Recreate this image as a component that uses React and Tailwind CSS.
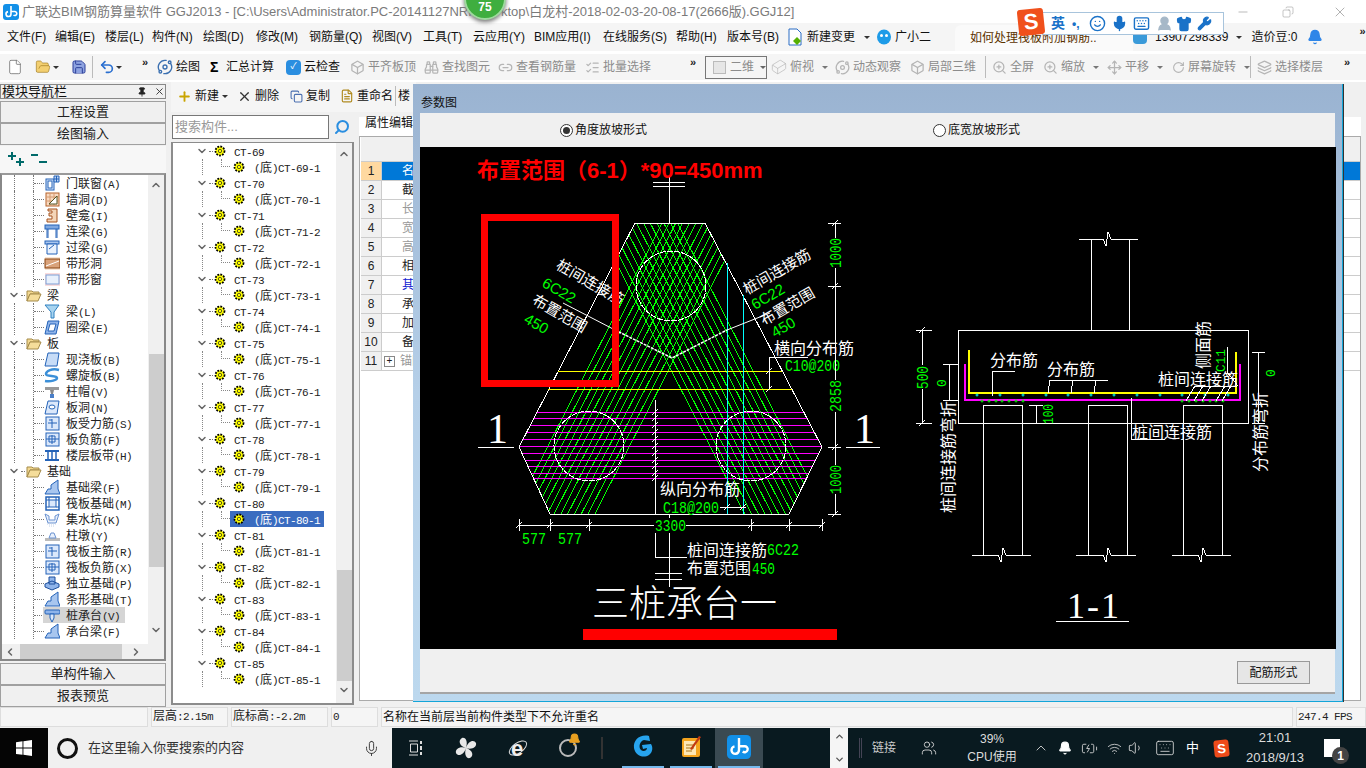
import React from 'react';
import {
  ChevronDown, ChevronUp, ChevronLeft, ChevronRight, Pin, X, Minus, Copy, Search, Plus,
  File, FileText, FolderOpen, Save, Undo2, Binoculars, Box, Orbit, ZoomIn, Move, RotateCw, Layers,
  Mic, Keyboard, Wrench, Shirt, Smile, Bell, Wifi, Volume1, BatteryCharging, Users, UserRound,
  Cuboid, ListChecks, Link2,
} from 'lucide-react';

const SANS = "[font-family:'Liberation_Sans','Noto_Sans_CJK_SC',sans-serif]";
const CJK_MONO = "[font-family:'Liberation_Mono','Noto_Sans_CJK_SC',monospace]";

// SimSun look: latin is half the width of a hanzi
const MonoText = ({ text }) => (
  <span className={`${CJK_MONO} whitespace-nowrap text-[12px] text-[#222]`}>
    {text.split(/([\u4e00-\u9fff]+)/).map((part, i) =>
      /[\u4e00-\u9fff]/.test(part)
        ? <span key={i}>{part}</span>
        : <span key={i} className="text-[11px] tracking-[-0.6px]">{part}</span>
    )}
  </span>
);

const Caret = ({ className = '' }) => (
  <span className={`inline-block border-x-[3px] border-t-[3px] border-x-transparent border-t-[#333] ${className}`} />
);

const Chevrons = ({ className = '' }) => (
  <span className={`text-[11px] font-bold leading-none tracking-[-1px] text-[#222] ${className}`}>»</span>
);

/* ---------- title + menu ---------- */

const AppLogo = ({ size = 16 }) => (
  <svg width={size} height={size} viewBox="0 0 16 16" className="shrink-0">
    <rect width="16" height="16" rx="3" fill="#1290e8" />
    <path d="M8 2v8M8 10a2.500 2.500 0 1 1-3-2.400M8 7.500h3.500a2 2 0 1 1-1 3.500" fill="none" stroke="#fff" strokeWidth="1.600" />
  </svg>
);

const TitleBar = () => (
  <div className="flex h-[23px] items-center bg-white pl-[3px] text-[13px] text-[#7a7a7a]">
    <AppLogo size={16} />
    <span className="ml-[3px] w-[444px] shrink-0 whitespace-nowrap">
      广联达BIM钢筋算量软件 GGJ2013 - [C:\Users\Administrator.PC-20141127NRHI
    </span>
    <span className="ml-[35px] whitespace-nowrap">ktop\白龙村-2018-02-03-20-08-17(2666版).GGJ12]</span>
    <div className="ml-auto flex items-center text-[#8a8a8a]">
      <Minus size={14} strokeWidth={1} className="mr-[32px]" />
      <Copy size={12} strokeWidth={1} className="mr-[38px] -scale-x-100" />
      <X size={16} strokeWidth={1} className="mr-[18px]" />
    </div>
  </div>
);

const MENU = [
  ['文件(F)', 48], ['编辑(E)', 50], ['楼层(L)', 47], ['构件(N)', 51], ['绘图(D)', 53], ['修改(M)', 53],
  ['钢筋量(Q)', 63], ['视图(V)', 51], ['工具(T)', 50], ['云应用(Y)', 61], ['BIM应用(I)', 69], ['在线服务(S)', 73],
  ['帮助(H)', 51], ['版本号(B)', 60],
];

const MenuBar = () => (
  <div className="flex h-[31px] items-center border-b-[3px] border-white bg-[#f5f5f5] pl-[7px] text-[12px] text-[#111]">
    {MENU.map(([label, w]) => (
      <span key={label} className="whitespace-nowrap" style={{ width: w }}>{label}</span>
    ))}
    <svg width="16" height="18" viewBox="0 0 16 18" className="mr-[4px]">
      <path d="M2 1h8l4 4v12H2z" fill="#fff" stroke="#2b6cc4" />
      <path d="M10 9l4 4-4 4-4-4z" fill="#56b000" />
    </svg>
    <span className="whitespace-nowrap">新建变更</span>
    <Caret className="ml-[9px] mr-[6px]" />
    <svg width="16" height="16" viewBox="0 0 16 16" className="mr-[3px]">
      <ellipse cx="8" cy="8" rx="7" ry="7.500" fill="#1d9be8" />
      <circle cx="5.500" cy="6.500" r="1.500" fill="#fff" />
      <circle cx="10.500" cy="6.500" r="1.500" fill="#fff" />
    </svg>
    <span className="whitespace-nowrap">广小二</span>
    <div className="ml-[24px] flex h-[26px] w-[178px] items-center self-end rounded-t-md bg-[#fafafa] pl-[15px] text-[#5a3200]">
      <span className="whitespace-nowrap">如何处理筏板附加钢筋..</span>
    </div>
    <span className="h-[14px] w-[14px] rounded-sm bg-[#3a9ad9]" />
    <span className="ml-[8px] whitespace-nowrap">13907298339</span>
    <Caret className="ml-[8px]" />
    <span className="ml-[9px] whitespace-nowrap">造价豆:0</span>
    <Bell size={16} fill="#2f86e8" stroke="#2f86e8" className="ml-[10px]" />
    <Chevrons className="ml-[36px] self-start pt-[3px]" />
  </div>
);

/* ---------- main toolbar ---------- */

const GRAY = '#b5b5b5';
const TOOLS = [
  { w: 28, icon: <File size={16} strokeWidth={1} color="#555" fill="#fff" /> },
  { w: 18, icon: <FolderOpen size={16} strokeWidth={1} color="#a07a20" fill="#f3cf70" /> },
  { w: 18, caret: true },
  { w: 21, icon: <Save size={16} strokeWidth={1.500} color="#2c3f9a" fill="#8ea3e0" /> },
  { w: 7, sep: true },
  { w: 17, icon: <Undo2 size={16} strokeWidth={2.500} color="#2a6fd0" /> },
  { w: 26, caret: true },
  { w: 15, more: true },
  { w: 53, icon: <Orbit size={16} color="#3a6fb0" />, text: '绘图' },
  { w: 76, icon: <span className="w-[13px] text-[14px] font-bold">Σ</span>, text: '汇总计算' },
  { w: 64, icon: <span className="flex h-[15px] w-[15px] items-center justify-center rounded-sm bg-[#2a8ee0] text-[9px] text-white">✓</span>, text: '云检查' },
  { w: 74, icon: <Box size={15} color={GRAY} />, text: '平齐板顶', off: true },
  { w: 74, icon: <Binoculars size={15} color={GRAY} />, text: '查找图元', off: true },
  { w: 87, icon: <Link2 size={15} color={GRAY} />, text: '查看钢筋量', off: true },
  { w: 105, icon: <ListChecks size={15} color={GRAY} />, text: '批量选择', off: true },
  { w: 15, more: true },
];
const TOOLS_RIGHT = [
  { w: 64, icon: <Cuboid size={16} strokeWidth={1} color={GRAY} />, text: '俯视', caretAfter: true, off: true },
  { w: 75, icon: <Orbit size={15} color={GRAY} />, text: '动态观察', off: true },
  { w: 75, icon: <Box size={15} color={GRAY} />, text: '局部三维', off: true },
  { w: 58, sepBefore: true, icon: <ZoomIn size={15} color={GRAY} />, text: '全屏', off: true },
  { w: 64, icon: <ZoomIn size={15} color={GRAY} />, text: '缩放', caretAfter: true, off: true },
  { w: 65, icon: <Move size={15} color={GRAY} />, text: '平移', caretAfter: true, off: true },
  { w: 78, icon: <RotateCw size={15} color={GRAY} />, text: '屏幕旋转', caretAfter: true, off: true },
];

const ToolItem = ({ t }) => {
  if (t.sep) return <div style={{ width: t.w }} className="flex h-[22px] shrink-0 justify-start"><span className="w-px bg-[#bbb]" /></div>;
  if (t.caret) return <div style={{ width: t.w }} className="flex shrink-0 items-center"><Caret /></div>;
  if (t.more) return <div style={{ width: t.w }} className="flex shrink-0 self-start pt-[3px]"><Chevrons /></div>;
  return (
    <div style={{ width: t.w }} className="flex shrink-0 items-center gap-[3px] whitespace-nowrap">
      {t.sepBefore && <span className="mr-[3px] h-[22px] w-px bg-[#bbb]" />}
      {t.icon}
      {t.text && <span className={t.off ? 'text-[#8c8c8c]' : 'text-[#111]'}>{t.text}</span>}
      {t.caretAfter && <Caret className="ml-[5px] border-t-[#777]" />}
    </div>
  );
};

const ToolBar = () => (
  <div className="flex h-[28px] items-center border-b-2 border-white bg-[#f5f5f5] pl-[7px] text-[12px]">
    {TOOLS.map((t, i) => <ToolItem key={i} t={t} />)}
    <div className="flex h-[23px] w-[62px] shrink-0 items-center border border-[#777] pl-[7px] text-[#8c8c8c]">
      <span className="mr-[4px] h-[13px] w-[13px] border border-[#bbb] bg-[#e6e6e6]" />
      二维
      <Caret className="ml-[6px] border-t-[#666]" />
    </div>
    <div className="w-[4px] shrink-0" />
    {TOOLS_RIGHT.map((t, i) => <ToolItem key={i} t={t} />)}
    <span className="mr-[6px] h-[22px] w-px shrink-0 bg-[#bbb]" />
    <Layers size={15} color={GRAY} className="shrink-0" />
    <span className="ml-[3px] whitespace-nowrap text-[#8c8c8c]">选择楼层</span>
    <Chevrons className="ml-[21px] self-start pt-[3px]" />
  </div>
);

/* ---------- module tree ---------- */

const TreeIcon = ({ kind }) => {
  const b = '#2463b8';
  const art = {
    window: <><rect x="2" y="4" width="8" height="11" fill="#dbe8fb" stroke={b} /><rect x="4" y="6" width="4" height="7" fill="#fff" stroke={b} /><path d="M10 1h5v6h-5zM12.500 1v6M10 4h5" fill="#bcd4f5" stroke={b} /></>,
    hole: <><rect x="2" y="2" width="13" height="13" fill="#f8d9c0" stroke="#b5622a" /><path d="M2 6h13M2 10h13M6 2v13M10 2v13" stroke="#d49a70" /><path d="M5 13l8-8v8z" fill="#fff" stroke="#552" /></>,
    niche: <path d="M4 2h9v13H3v-3h5v-3H5V6h3V4H4z" fill="#f4d5b8" stroke="#a5531f" />,
    lintel: <><rect x="1" y="2" width="14" height="4" fill="#7fa8e0" stroke={b} /><path d="M4 6v9M12 6v9M3 6v9M13 6v9" stroke={b} /></>,
    lintel2: <><rect x="1" y="2" width="14" height="3" fill="#a9c6ef" stroke={b} /><path d="M3 5h10v10H3z" fill="#eaf2fd" stroke={b} /><path d="M5 10l5-4" stroke={b} /></>,
    band: <><rect x="1" y="2" width="15" height="13" fill="#f9e4d2" /><rect x="1" y="4" width="15" height="9" fill="#d9a27a" stroke="#8a4512" /><path d="M2 11l13-5" stroke="#fff" /></>,
    bandw: <><rect x="1" y="2" width="15" height="13" fill="#fbdcdc" /><rect x="2" y="4" width="13" height="9" fill="#e8f0fc" stroke="#7d9fd6" /></>,
    beam: <path d="M1 2h14l-5 7v6H7V9z" fill="#a8d4f0" stroke="#2f80c0" />,
    ring: <path d="M4 2h11l-3 13H1zM6 5l-2 7h6l2-7z" fill="#8fb4ea" stroke={b} fillRule="evenodd" />,
    slab: <path d="M4 2h11l-2 13H1z" fill="#c7dcf7" stroke={b} />,
    spiral: <path d="M15 3C8 1 2 4 2 7c0 3 11 1 11 4 0 2-6 4-12 3" fill="none" stroke="#3b8fd8" strokeWidth="2.500" />,
    cap: <><rect x="1" y="4" width="14" height="3" fill="#999" /><path d="M6 7h4l-1 4H7z" fill="#888" /><rect x="6" y="11" width="4" height="4" fill="#4a7fc8" /></>,
    slabhole: <><path d="M4 2h11l-2 13H1z" fill="#dbe8fb" stroke={b} /><ellipse cx="8" cy="8" rx="3" ry="2" fill="#fff" stroke={b} /></>,
    rebar: <><rect x="2" y="2" width="13" height="13" fill="#dbe8fb" stroke={b} /><path d="M4 8h9M8 4v9M5 5h3" stroke={b} /></>,
    rebar2: <><rect x="2" y="2" width="13" height="13" fill="#dbe8fb" stroke={b} /><path d="M2 8h13M8 4v9M5 5v6h6V5z" fill="none" stroke={b} /></>,
    strip: <><rect x="1" y="3" width="14" height="2" fill={b} /><rect x="1" y="12" width="14" height="2" fill={b} /><path d="M4 5v7M8 5v7M12 5v7" stroke={b} strokeWidth="1.500" /></>,
    fbeam: <path d="M1 15l3-5h3V6l7-5v9l2 5z" fill="#a8c6ef" stroke={b} />,
    raft: <><rect x="2" y="2" width="13" height="13" fill="none" stroke={b} strokeWidth="1.500" /><rect x="5" y="5" width="7" height="7" fill="#dbe8fb" stroke={b} /><path d="M2 5h3M12 5h3M2 12h3M12 12h3M5 2v3M12 2v3" stroke={b} /></>,
    pit: <><path d="M1 3l4 2v4h6V5l4-2-3 9H4z" fill="#e8f0fc" stroke="#6a92d0" /><path d="M3 13h10M5 15h6" stroke="#c0d0e8" strokeDasharray="1 1" /></>,
    pier: <><rect x="1" y="11" width="15" height="3" fill="#bbb" /><path d="M5 11l2-5h3l2 5z" fill="#e8f0fc" stroke="#6a92d0" /></>,
    iso: <path d="M1 9l7-3 7 3v3l-7 3-7-3zM5 2h6v7H5z" fill="#8fb4ea" stroke="#1d4f9c" />,
    cap2: <><rect x="1" y="3" width="15" height="4" rx="1" fill="#8fb4ea" stroke={b} /><path d="M6 7h4v4l-2 4-2-4z" fill="#dbe8fb" stroke={b} /></>,
  };
  return <svg width="16" height="16" viewBox="0 0 16 16" className="shrink-0">{art[kind]}</svg>;
};

const Folder = () => (
  <svg width="16" height="14" viewBox="0 0 16 14" className="shrink-0">
    <path d="M1 3h5l1 1h6v2H4L1 13z" fill="#f3d890" stroke="#a58b4a" />
    <path d="M4 6h11l-3 7H1z" fill="#f5dd9a" stroke="#a58b4a" />
  </svg>
);

const MODULES = [
  ['门联窗(A)', 'window'], ['墙洞(D)', 'hole'], ['壁龛(I)', 'niche'], ['连梁(G)', 'lintel'], ['过梁(G)', 'lintel2'],
  ['带形洞', 'band'], ['带形窗', 'bandw'], ['梁'], ['梁(L)', 'beam'], ['圈梁(E)', 'ring'], ['板'],
  ['现浇板(B)', 'slab'], ['螺旋板(B)', 'spiral'], ['柱帽(V)', 'cap'], ['板洞(N)', 'slabhole'], ['板受力筋(S)', 'rebar'],
  ['板负筋(F)', 'rebar2'], ['楼层板带(H)', 'strip'], ['基础'], ['基础梁(F)', 'fbeam'], ['筏板基础(M)', 'raft'],
  ['集水坑(K)', 'pit'], ['柱墩(Y)', 'pier'], ['筏板主筋(R)', 'rebar'], ['筏板负筋(X)', 'rebar2'], ['独立基础(P)', 'iso'],
  ['条形基础(T)', 'fbeam'], ['桩承台(V)', 'cap2'], ['承台梁(F)', 'fbeam'],
];

const ModuleRow = ({ label, kind }) => {
  const selected = label === '桩承台(V)';
  if (!kind) {
    return (
      <div className="flex h-4 items-center pl-[6px]">
        <ChevronDown size={12} strokeWidth={3} color="#666" className="shrink-0" />
        <span className="mx-[1px] w-[4px] border-t border-dotted border-[#777]" />
        <Folder />
        <span className="ml-[5px]"><MonoText text={label} /></span>
      </div>
    );
  }
  return (
    <div className="flex h-4 items-center pl-[12px]">
      <span className="h-full w-[19px] shrink-0 border-l border-dotted border-[#777]" />
      <span className="flex h-full w-[11px] shrink-0 items-center border-l border-dotted border-[#777]">
        <span className="w-full border-t border-dotted border-[#777]" />
      </span>
      <div className={`-ml-[1px] flex h-4 items-center pl-[1px] pr-[5px] ${selected ? 'bg-[#d5d5d5]' : ''}`}>
        <TreeIcon kind={kind} />
        <span className="ml-[6px]"><MonoText text={label} /></span>
      </div>
    </div>
  );
};

const SideButton = ({ children }) => (
  <div className="flex h-[22px] items-center justify-center border border-[#a0a0a0] bg-[#f0f0f0] text-[13px] text-[#222]">{children}</div>
);

const ModulePanel = () => (
  <div className="flex w-[166px] shrink-0 flex-col pt-[2px]">
    <div className="flex h-[15px] items-center border border-[#888] bg-[#f0f0f0] pl-[1px] text-[13px] leading-none text-[#111]">
      <span className="whitespace-nowrap">模块导航栏</span>
      <Pin size={10} className="ml-[70px]" color="#222" fill="#222" />
      <X size={11} className="ml-[7px]" color="#333" />
    </div>
    <div className="mt-[2px]"><SideButton>工程设置</SideButton></div>
    <SideButton>绘图输入</SideButton>
    <div className="mt-[1px] flex h-[27px] items-center bg-[#f7f7f7] pl-[8px]">
      <svg width="40" height="16" viewBox="0 0 40 16" fill="none" stroke="#006a6a" strokeWidth="2">
        <path d="M0 4h8M4 0v8M8 10h8M12 6v8M23 3h7M31 10h8" />
      </svg>
    </div>
    <div className="flex h-[488px] flex-col border-2 border-t-[#999] border-[#888] bg-[#f0f0f0]">
      <div className="flex min-h-0 flex-1">
        <div className="min-w-0 flex-1 overflow-hidden bg-white">
          {MODULES.map(([label, kind]) => <ModuleRow key={label} label={label} kind={kind} />)}
        </div>
        <div className="flex w-[16px] shrink-0 flex-col items-center pt-[4px]">
          <ChevronUp size={12} strokeWidth={3} color="#666" />
          <div className="mt-[163px] h-[213px] w-[15px] bg-[#cdcdcd]" />
          <ChevronDown size={12} strokeWidth={3} color="#666" className="mt-[57px]" />
        </div>
      </div>
      <div className="flex h-[15px] shrink-0 items-center bg-[#f0f0f0]">
        <ChevronLeft size={12} strokeWidth={3} color="#666" className="ml-[2px]" />
        <div className="ml-[4px] h-[15px] w-[102px] bg-[#cdcdcd]" />
        <ChevronRight size={12} strokeWidth={3} color="#666" className="ml-[8px]" />
      </div>
    </div>
    <div className="mt-[2px]"><SideButton>单构件输入</SideButton></div>
    <SideButton>报表预览</SideButton>
  </div>
);

/* ---------- component tree ---------- */

const Gear = () => (
  <svg width="12" height="12" viewBox="0 0 12 12" className="shrink-0">
    <circle cx="6" cy="6" r="4.500" fill="#ff0" stroke="#000" strokeWidth="1.800" strokeDasharray="1.800 1.200" />
    <circle cx="6" cy="6" r="1.700" fill="#ff0" stroke="#332" strokeWidth="0.800" />
  </svg>
);

const CT_NUMBERS = Array.from({ length: 17 }, (_, i) => 69 + i);

const CtRows = ({ n }) => {
  const suffix = n === 71 ? 2 : 1;
  const selected = n === 80;
  return (
    <>
      <div className="flex h-4 items-center pl-[23px]">
        <ChevronDown size={12} strokeWidth={3} color="#666" className="shrink-0" />
        <span className="mx-[1px] w-[4px] border-t border-dotted border-[#777]" />
        <Gear />
        <span className="ml-[8px]"><MonoText text={`CT-${n}`} /></span>
      </div>
      <div className="flex h-4 items-center pl-[29px]">
        <span className="h-full w-[19px] shrink-0 border-l border-dotted border-[#888]" />
        <span className="h-1/2 w-[9px] shrink-0 self-start border-b border-l border-dotted border-[#888]" />
        <div className={`flex h-4 items-center pl-[3px] pr-[4px] ${selected ? 'bg-[#3a6cc0]' : ''}`}>
          <Gear />
          <span className={`ml-[9px] ${selected ? '[&_span]:text-white' : ''}`}><MonoText text={`(底)CT-${n}-${suffix}`} /></span>
        </div>
      </div>
    </>
  );
};

const ToolText = ({ icon, children, className = '' }) => (
  <div className={`flex shrink-0 items-center gap-[3px] whitespace-nowrap ${className}`}>{icon}{children}</div>
);

const ComponentPanel = () => (
  <div className="ml-[5px] flex w-[183px] shrink-0 flex-col">
    <div className="flex h-[30px] w-[245px] shrink-0 items-center bg-[#f5f5f5] pb-[2px] pl-[6px] text-[12px] text-[#111]">
      <ToolText icon={<Plus size={15} color="#c9a400" strokeWidth={3} />}>新建</ToolText>
      <Caret className="ml-[3px]" />
      <ToolText className="ml-[9px]" icon={<X size={15} strokeWidth={2} color="#333" />}>删除</ToolText>
      <ToolText className="ml-[11px]" icon={<Copy size={13} color="#4a6fb0" />}>复制</ToolText>
      <ToolText className="ml-[10px]" icon={<FileText size={14} color="#b08a20" />}>重命名</ToolText>
      <span className="ml-[2px] h-[20px] w-px shrink-0 bg-[#bbb]" />
      <span className="ml-[2px] whitespace-nowrap">楼</span>
    </div>
    <div className="flex h-[30px] shrink-0 items-center pl-[1px]">
      <div className="flex h-[24px] w-[157px] items-center border border-[#777] bg-white pl-[2px] text-[13px] text-[#999]">搜索构件...</div>
      <Search size={16} color="#2a8ee0" strokeWidth={3} className="ml-[5px] -scale-x-100" />
    </div>
    <div className="flex h-[563px] border-2 border-t border-[#8c8c8c] bg-white">
      <div className="min-w-0 flex-1 overflow-hidden">
        {CT_NUMBERS.map((n) => <CtRows key={n} n={n} />)}
      </div>
      <div className="flex w-[16px] shrink-0 flex-col items-center bg-[#f0f0f0] pt-[5px]">
        <ChevronUp size={12} strokeWidth={3} color="#666" />
        <div className="mt-[410px] h-[111px] w-[15px] bg-[#cdcdcd]" />
        <ChevronDown size={12} strokeWidth={3} color="#666" className="mt-[3px]" />
      </div>
    </div>
  </div>
);

/* ---------- property grid (mostly behind the dialog) ---------- */

const PROPS = [
  ['名称', 'text-white'], ['截面形状', 'text-[#222]'], ['长度', 'text-[#999]'], ['宽度', 'text-[#999]'], ['高度', 'text-[#999]'],
  ['相对底标高', 'text-[#222]'], ['其它属性', 'text-[#1020d0]'], ['承台', 'text-[#222]'], ['加强筋', 'text-[#222]'], ['备注', 'text-[#222]'], ['锚固搭接', 'text-[#999]'],
];

const PropertyPanel = () => (
  <div className="ml-[5px] flex w-[1002px] shrink-0 flex-col pt-[35px]">
    <div className="flex h-[19px] items-center bg-white pb-[8px] pl-[6px] text-[12px] text-[#111]">属性编辑</div>
    <div className="h-[565px] border border-[#aaa] bg-white pl-[1px]">
      <div className="h-[25px] border-b border-[#ccc] bg-[#f0f0f0]" />
      {PROPS.map(([name, color], i) => (
        <div key={name} className="flex h-[19px] border-b border-[#ccc] text-[12px]">
          <div className={`flex w-[21px] shrink-0 items-center justify-center border-r border-[#ccc] text-[#222] ${i === 0 ? 'bg-[#ffd9a0]' : 'bg-[#f0f0f0]'}`}>{i + 1}</div>
          <div className={`flex flex-1 items-center whitespace-nowrap ${i === 0 ? 'bg-[#0078d7]' : ''} ${i === 10 ? 'pl-[2px]' : 'pl-[20px]'} ${color}`}>
            {i === 10 && <span className="mr-[5px] flex h-[11px] w-[11px] items-center justify-center border border-[#888] text-[10px] leading-none text-[#222]">+</span>}
            {name}
          </div>
        </div>
      ))}
    </div>
  </div>
);

/* ---------- CAD drawing ---------- */

const GREEN = '#00ff00';
const YELLOW = '#ffff00';
const MAGENTA = '#ff00ff';
const CYAN = '#00ffff';
const WHITE = '#ffffff';
const RED = '#ff0000';

const HEX = '635,223 705,223 822,447 789,514 550,514 519,447';
const HATCH_OFFSETS = Array.from({ length: 13 }, (_, i) => -41 + i * 6.8);
const MAGENTA_YS = [412, 418, 425, 432, 439, 446, 453, 460, 466, 473, 478];
const CYAN_TOP = [977, 1000, 1023, 1046, 1068, 1091, 1114, 1137, 1160, 1182, 1205, 1228];
const GREEN_BOT = [982, 989, 996, 1002, 1009, 1016, 1023, 1182, 1189, 1196, 1203, 1210, 1216, 1223];

const CadL = ({ d, color = WHITE, w = 1, dash }) => (
  <path d={d} fill="none" stroke={color} strokeWidth={w} strokeDasharray={dash} shapeRendering="crispEdges" />
);

const CadT = ({ x, y, size = 16, color = WHITE, rot, len, bold, thin, mono, children }) => (
  <text
    x={x} y={y} fontSize={size} fill={color}
    fontWeight={bold ? 700 : thin ? 300 : 400}
    textLength={len} lengthAdjust={len ? 'spacingAndGlyphs' : undefined}
    transform={rot != null ? `rotate(${rot} ${x} ${y})` : undefined}
    className={mono ? "[font-family:'Liberation_Mono',monospace]" : SANS}
  >{children}</text>
);

// a 45 degree dimension tick
const Tick = ({ x, y }) => <path d={`M${x - 3} ${y + 3}L${x + 3} ${y - 3}`} stroke={WHITE} fill="none" shapeRendering="crispEdges" />;

const BreakLine = ({ x1, x2, y, at }) => (
  <path d={`M${x1} ${y}H${at - 4}L${at - 1} ${y + 7}L${at + 1} ${y - 7}L${at + 4} ${y}H${x2}`} fill="none" stroke={WHITE} shapeRendering="crispEdges" />
);

const PlusMark = ({ x, y, color }) => (
  <path d={`M${x - 1.500} ${y}h3M${x} ${y - 1.500}v3`} stroke={color} fill="none" />
);

const CadDrawing = () => (
  <svg width="916" height="502" viewBox="420 147 916 502" className="block shrink-0 bg-black">
    <defs>
      <clipPath id="hex"><polygon points={HEX} /></clipPath>
    </defs>

    <g clipPath="url(#hex)">
      {HATCH_OFFSETS.map((dx) => (
        <g key={dx} stroke={GREEN} fill="none" shapeRendering="crispEdges">
          <line x1={715 + dx} y1="200" x2={544 + dx} y2="534" />
          <line x1={625 + dx} y1="200" x2={796 + dx} y2="534" />
        </g>
      ))}
      {MAGENTA_YS.map((y) => <line key={y} x1="510" x2="830" y1={y} y2={y} stroke={MAGENTA} shapeRendering="crispEdges" />)}
    </g>

    <polygon points={HEX} fill="none" stroke={WHITE} shapeRendering="crispEdges" />
    <circle cx="671" cy="286" r="35" fill="none" stroke={WHITE} strokeDasharray="6 1" shapeRendering="crispEdges" />
    <circle cx="589" cy="446" r="35" fill="none" stroke={WHITE} strokeDasharray="6 1" shapeRendering="crispEdges" />
    <circle cx="751" cy="446" r="35" fill="none" stroke={WHITE} strokeDasharray="6 1" shapeRendering="crispEdges" />

    <CadL d="M558 371H782" color={YELLOW} />
    <CadL d="M548 389H792" color={YELLOW} />
    <CadL d="M727 263V514" color={CYAN} />
    <CadL d="M743 295V514" color={CYAN} />

    {/* top column break */}
    <CadL d="M669 177V223M653 182H685M653 186H685" />

    {/* leaders to the pile links */}
    <path d="M563 303L615 330" stroke={WHITE} fill="none" />
    <path d="M615 330L672 358L727 330" stroke={WHITE} strokeWidth="1.500" strokeDasharray="3 1" fill="none" />
    <path d="M727 330L770 313" stroke={WHITE} fill="none" />

    <CadT x={555} y={268} size={15} rot={30}>桩间连接筋</CadT>
    <CadT x={541} y={286} size={15} color={GREEN} rot={30}>6C22</CadT>
    <CadT x={531} y={303} size={15} rot={30}>布置范围</CadT>
    <CadT x={523} y={322} size={15} color={GREEN} rot={30}>450</CadT>
    <CadT x={747} y={295} size={15} rot={-30}>桩间连接筋</CadT>
    <CadT x={755} y={310} size={15} color={GREEN} rot={-30}>6C22</CadT>
    <CadT x={764} y={326} size={15} rot={-30}>布置范围</CadT>
    <CadT x={775} y={338} size={15} color={GREEN} rot={-30}>450</CadT>

    <CadT x={774} y={354} size={16}>横向分布筋</CadT>
    <CadL d="M808 357H769V389" />
    <Tick x={769} y={371} />
    <Tick x={769} y={389} />
    <CadT x={785} y={371} size={16} color={GREEN} mono len={55}>C10@200</CadT>

    {/* right hand dimension chain */}
    <CadL d="M835 223V238M835 268V380M835 412V465M835 494V514M828 223H841M828 286H841M828 447H841M828 514H841" />
    <Tick x={835} y={223} /><Tick x={835} y={286} /><Tick x={835} y={447} /><Tick x={835} y={514} />
    <CadT x={841} y={268} size={16} color={GREEN} rot={-90} mono len={30}>1000</CadT>
    <CadT x={841} y={412} size={16} color={GREEN} rot={-90} mono len={32}>2858</CadT>
    <CadT x={841} y={494} size={16} color={GREEN} rot={-90} mono len={29}>1000</CadT>

    {/* section marks */}
    <CadL d="M478 447H514M846 447H880" />
    <text x="487" y="443" fontSize="42" fill={WHITE} className="[font-family:'Liberation_Serif',serif]">1</text>
    <text x="854" y="443" fontSize="42" fill={WHITE} className="[font-family:'Liberation_Serif',serif]">1</text>

    {/* centre leader with bar ticks */}
    <CadL d="M655 400V514M655 533V557H687M669 514V518M669 533V587M655 573H682M655 579H682" />
    {MAGENTA_YS.map((y) => <Tick key={y} x={655} y={y} />)}

    <CadT x={660} y={495} size={16}>纵向分布筋</CadT>
    <CadT x={663} y={513} size={16} color={GREEN} mono len={56}>C18@200</CadT>
    <CadL d="M720 507H746" />
    <Tick x={727} y={507} /><Tick x={743} y={507} />

    {/* bottom dimension chain */}
    <CadL d="M519 525H654M686 525H822M519 519V531M550 519V531M589 519V531M751 519V531M789 519V531M822 519V531" />
    <Tick x={519} y={525} /><Tick x={550} y={525} /><Tick x={589} y={525} /><Tick x={751} y={525} /><Tick x={789} y={525} /><Tick x={822} y={525} />
    <CadT x={655} y={531} size={16} color={GREEN} mono len={31}>3300</CadT>
    <CadT x={522} y={544} size={16} color={GREEN} mono len={24}>577</CadT>
    <CadT x={558} y={544} size={16} color={GREEN} mono len={24}>577</CadT>

    <CadT x={687} y={556} size={16}>桩间连接筋</CadT>
    <CadT x={767} y={555} size={16} color={GREEN} mono len={32}>6C22</CadT>
    <CadT x={687} y={574} size={16}>布置范围</CadT>
    <CadT x={752} y={574} size={16} color={GREEN} mono len={23}>450</CadT>

    <CadT x={592} y={617} size={37} thin>三桩承台一</CadT>
    <rect x="583" y="629" width="254" height="11" fill={RED} />

    {/* annotations in red */}
    <rect x="484.500" y="217.500" width="131" height="166" fill="none" stroke={RED} strokeWidth="7" />
    <CadT x={477} y={178} size={22} color={RED} bold>布置范围（6-1）*90=450mm</CadT>

    {/* section 1-1 */}
    <CadL d="M958 330H1248V423H958ZM1091 239V330M1129 239V330" />
    <BreakLine x1={1079} x2={1138} y={239} at={1107} />
    <CadL d="M969 350V393H1236V352" color={YELLOW} w={2} />
    <CadL d="M965 364V400H1240V364" color={MAGENTA} w={2} />
    <CadL d="M983 555V405H1022V555M1088 555V405H1127V555M1183 555V405H1222V555" />
    <BreakLine x1={972} x2={1031} y={555} at={1002} />
    <BreakLine x1={1076} x2={1136} y={555} at={1107} />
    <BreakLine x1={1172} x2={1231} y={555} at={1202} />

    {CYAN_TOP.map((x) => <PlusMark key={x} x={x} y={395} color={CYAN} />)}
    {GREEN_BOT.map((x) => <PlusMark key={x} x={x} y={401} color={GREEN} />)}

    <CadL d="M922 330V365M922 389V423M916 330H932M916 423H932M949 364V400M943 364H958M943 400H958" />
    <Tick x={922} y={330} /><Tick x={922} y={423} />
    <CadT x={928} y={389} size={16} color={GREEN} rot={-90} mono len={23}>500</CadT>
    <CadT x={946} y={387} size={13} color={GREEN} rot={-90} mono>0</CadT>
    <CadT x={954} y={513} size={16} rot={-90}>桩间连接筋弯折</CadT>

    <CadL d="M1258 352V423M1252 352H1265M1252 423H1265" />
    <CadT x={1275} y={377} size={13} color={GREEN} rot={-90} mono>0</CadT>
    <CadT x={1266} y={472} size={16} rot={-90}>分布筋弯折</CadT>

    <CadT x={990} y={366} size={16}>分布筋</CadT>
    <CadL d="M1015 371H992V396" />
    <CadT x={1047} y={375} size={16}>分布筋</CadT>
    <path d="M1108 380H1050L1048 393M1073 380L1071 393M1096 380L1094 393" stroke={WHITE} fill="none" shapeRendering="crispEdges" />
    <CadT x={1158} y={385} size={16}>桩间连接筋</CadT>
    <path d="M1237 386H1195M1195 386L1186 401M1203 386L1194 401M1211 386L1202 401M1225 386L1216 401M1231 386L1222 401" stroke={WHITE} fill="none" shapeRendering="crispEdges" />
    <CadT x={1209} y={369} size={16} rot={-90}>侧面筋</CadT>
    <CadT x={1225} y={372} size={13} color={GREEN} rot={-90} mono len={23}>C11</CadT>
    <path d="M1227 347V372L1238 386" stroke={WHITE} fill="none" shapeRendering="crispEdges" />

    <CadT x={1132} y={438} size={16}>桩间连接筋</CadT>
    <CadL d="M1131 398V439H1165" />

    <CadL d="M1036 405V423M1029 405H1043M1029 423H1043" />
    <CadT x={1053} y={424} size={14} color={GREEN} rot={-90} mono len={20}>100</CadT>

    <text x="1067" y="618" fontSize="36" fill={WHITE} className="[font-family:'Liberation_Serif',serif]" textLength="52">1-1</text>
    <CadL d="M1056 621H1129" />
  </svg>
);

/* ---------- dialog ---------- */

const Radio = ({ checked, label, className = '' }) => (
  <div className={`flex items-center gap-[2px] ${className}`}>
    <span className="flex h-[13px] w-[13px] items-center justify-center rounded-full border border-[#333] bg-white">
      {checked && <span className="h-[7px] w-[7px] rounded-full bg-[#333]" />}
    </span>
    <span className="whitespace-nowrap text-[12px] text-[#111]">{label}</span>
  </div>
);

const ParamDialog = () => (
  <div className="absolute left-[413px] top-[84px] flex h-[618px] w-[930px] flex-col border-b border-r border-[#12a5d8] bg-gradient-to-b from-[#9ab3d1] via-[#b5cfe8] to-[#bcd8ee] px-[7px] shadow-[1px_0_0_#333]">
    <div className="flex h-[29px] shrink-0 items-center pl-px pt-[8px] text-[12px] text-[#111]">参数图</div>
    <div className="flex h-[34px] shrink-0 items-center bg-[#f0f0f0] pl-[140px]">
      <Radio checked label="角度放坡形式" />
      <Radio label="底宽放坡形式" className="ml-[286px]" />
    </div>
    <CadDrawing />
    <div className="flex h-[45px] shrink-0 items-start justify-end border-b-2 border-[#a5a5a5] bg-[#f0f0f0] pr-[25px] pt-[12px]">
      <div className="flex h-[23px] w-[73px] items-center justify-center border border-[#999] bg-[#e6e6e6] text-[12px] text-[#111]">配筋形式</div>
    </div>
  </div>
);

/* ---------- status + taskbar ---------- */

const StatusCell = ({ w, children, grow }) => (
  <div style={grow ? undefined : { width: w }} className={`flex h-full shrink-0 items-center border border-[#ddd] bg-[#f5f5f5] pl-[1px] ${grow ? 'flex-1' : ''}`}>
    {children}
  </div>
);

const StatusBar = () => (
  <div className="flex h-[21px] gap-[3px] bg-[#f0f0f0] pb-px">
    <StatusCell w={148} />
    <StatusCell w={77}><MonoText text="层高:2.15m" /></StatusCell>
    <StatusCell w={97}><MonoText text="底标高:-2.2m" /></StatusCell>
    <StatusCell w={47}><MonoText text="0" /></StatusCell>
    <StatusCell grow><span className="text-[12px] text-[#111]">名称在当前层当前构件类型下不允许重名</span></StatusCell>
    <StatusCell w={70}><MonoText text="247.4 FPS" /></StatusCell>
  </div>
);

const TaskIcon = ({ children, active, running }) => (
  <div className={`flex h-full w-[48px] shrink-0 flex-col items-center ${active ? 'bg-[#3a4a52]' : ''}`}>
    <div className="flex flex-1 items-center justify-center">{children}</div>
    <span className={`h-[2px] ${running ? 'w-[42px] bg-[#76b9ed]' : ''}`} />
  </div>
);

const TaskBar = () => (
  <div className="flex h-[40px] items-center bg-[#091a20] text-[#ddd]">
    <div className="flex h-full w-[48px] shrink-0 items-center justify-center bg-[#050505]">
      <svg width="16" height="16" viewBox="0 0 16 16"><path d="M0 2.200l6.500-.9v6.300H0zM7.400 1.200L16 0v7.600H7.400zM0 8.500h6.500v6.300L0 13.900zM7.400 8.500H16V16l-8.600-1.200z" fill="#fff" /></svg>
    </div>
    <div className="flex h-full w-[344px] shrink-0 items-center bg-[#f0f0f0] pl-[9px] text-[13px] text-[#333]">
      <span className="h-[21px] w-[21px] shrink-0 rounded-full border-[3px] border-[#111]" />
      <span className="ml-[10px] whitespace-nowrap">在这里输入你要搜索的内容</span>
      <Mic size={17} strokeWidth={1.300} className="ml-[119px] shrink-0" color="#333" />
    </div>
    <div className="flex h-full w-[48px] shrink-0 items-center justify-center">
      <svg width="16" height="16" viewBox="0 0 16 16" fill="none" stroke="#ddd"><path d="M1 1h9M1 15h9M2.500 4h7v8h-7z" /><path d="M13 1v3M13 6v4M13 12v3" strokeWidth="2" /></svg>
    </div>
    <div className="ml-[2px] flex h-full w-[48px] shrink-0 items-center justify-center">
      <svg width="22" height="24" viewBox="0 0 22 24" fill="#e8e8e8"><path d="M11 12C4 10 3 4 7 2c4-1 6 4 4 10zM11 12c2-7 8-9 10-5 1 4-4 7-10 5zM11 12c7 2 8 8 4 10-4 1-6-4-4-10zM11 12c-2 7-8 9-10 5-1-4 4-7 10-5z" /></svg>
    </div>
    <div className="ml-[4px] flex h-full w-[48px] shrink-0 items-center justify-center">
      <svg width="22" height="24" viewBox="0 0 22 24"><ellipse cx="11" cy="12" rx="10" ry="5" fill="none" stroke="#ddd" transform="rotate(-35 11 12)" /><text x="4" y="20" fontSize="22" fontWeight="700" fill="#eee" className="[font-family:'Liberation_Sans',sans-serif]">e</text></svg>
    </div>
    <div className="relative ml-[2px] flex h-full w-[48px] shrink-0 items-center justify-center">
      <span className="h-[18px] w-[18px] rounded-full border-2 border-[#bbb]" />
      <Bell size={13} fill="#e8a020" stroke="#e8a020" className="absolute right-[11px] top-[5px]" />
    </div>
    <div className="ml-[9px] h-[22px] w-[2px] shrink-0 bg-[#333]" />
    <div className="ml-[16px] flex h-full shrink-0">
      <TaskIcon running>
        <svg width="26" height="28" viewBox="0 0 26 28"><path d="M19 3C10 1 3 7 4 15c1 7 9 11 15 7 4-3 4-8 2-11l-9 1 1 4 4-1c0 3-4 4-6 2-3-3-1-9 3-10l6 1z" fill="#27a4ee" /></svg>
      </TaskIcon>
      <TaskIcon running>
        <svg width="22" height="24" viewBox="0 0 22 24"><rect x="2" y="3" width="18" height="19" rx="2" fill="#f4a41e" /><rect x="4" y="6" width="12" height="14" fill="#fde7b5" /><path d="M6 10h8M6 13h8M6 16h6" stroke="#a8741a" /><path d="M19 1l-9 13 2 1 9-13z" fill="#c23a12" /></svg>
      </TaskIcon>
      <TaskIcon active running><AppLogo size={24} /></TaskIcon>
    </div>
    <div className="w-[67px] shrink-0" />
    <div className="flex h-full w-[18px] shrink-0 flex-col items-center justify-center gap-[12px] bg-[#f5f5f5]">
      <ChevronUp size={11} strokeWidth={3} color="#555" />
      <ChevronDown size={11} strokeWidth={3} color="#555" />
    </div>
    <span className="ml-[11px] h-[20px] w-[3px] shrink-0 border-x border-[#445]" />
    <span className="ml-[10px] w-[30px] shrink-0 text-[12px] text-[#ccc]">链接</span>
    <Users size={16} strokeWidth={1.300} className="ml-[19px] shrink-0" />
    <div className="ml-[23px] flex w-[64px] shrink-0 flex-col items-center text-[12px] leading-[18px]">
      <span>39%</span>
      <span className="whitespace-nowrap">CPU使用</span>
    </div>
    <ChevronUp size={16} strokeWidth={1.300} className="ml-[9px] shrink-0" />
    <Bell size={14} fill="#fff" stroke="#fff" className="ml-[9px] shrink-0" />
    <BatteryCharging size={17} strokeWidth={1.200} className="ml-[9px] shrink-0" />
    <Wifi size={15} strokeWidth={1.300} className="ml-[9px] shrink-0" />
    <Volume1 size={16} strokeWidth={1.300} className="ml-[6px] shrink-0" />
    <Keyboard size={20} strokeWidth={1} className="ml-[11px] shrink-0" />
    <span className="ml-[11px] w-[14px] shrink-0 text-[13px] text-white">中</span>
    <span className="ml-[14px] flex h-[17px] w-[15px] shrink-0 -rotate-6 items-center justify-center rounded-[3px] bg-[#ee4b1a] text-[13px] font-bold leading-none text-white">S</span>
    <div className="ml-[16px] flex w-[60px] shrink-0 flex-col items-center text-[13px] leading-[20px]">
      <span>21:01</span>
      <span className="whitespace-nowrap">2018/9/13</span>
    </div>
    <div className="relative ml-[19px] h-[18px] w-[16px] shrink-0 bg-white">
      <span className="absolute -bottom-[7px] -right-[9px] flex h-[17px] w-[17px] items-center justify-center rounded-full bg-[#444] text-[12px] font-bold leading-none text-white">1</span>
    </div>
  </div>
);

/* ---------- floating bits ---------- */

const ImeBar = () => (
  <div className="absolute left-[1018px] top-[9px] flex items-end">
    <div className="z-10 flex h-[26px] w-[26px] -rotate-6 items-center justify-center rounded-[3px] bg-[#f0501c] text-[22px] font-bold leading-none text-white">S</div>
    <div className="-ml-[2px] flex h-[23px] w-[182px] items-center border border-[#a8c4dc] bg-white pl-[8px] text-[#1a72c8]">
      <span className="w-[21px] text-[14px] font-bold">英</span>
      <span className="w-[17px] text-[12px] font-bold leading-none">•,</span>
      <Smile size={17} className="mr-[5px]" />
      <Mic size={17} fill="#1a72c8" className="mr-[5px]" />
      <Keyboard size={17} className="mr-[6px]" />
      <UserRound size={17} color="#a6b8c8" fill="#a6b8c8" className="mr-[3px]" />
      <Shirt size={16} fill="#1a72c8" className="mr-[5px]" />
      <Wrench size={15} fill="#1a72c8" />
    </div>
  </div>
);

const ScoreBadge = () => (
  <div className="absolute left-[464px] -top-[22px] flex h-[42px] w-[42px] items-end justify-center rounded-full border-2 border-[#9fd89f] bg-[#3fae3f] pb-[5px] text-[12px] font-bold leading-none text-white shadow-[0_2px_4px_#777]">75</div>
);

export default function App() {
  return (
    <div className={`relative flex h-[768px] w-[1366px] flex-col overflow-hidden bg-[#f0f0f0] ${SANS}`}>
      <TitleBar />
      <MenuBar />
      <ToolBar />
      <div className="flex h-[625px] overflow-hidden">
        <ModulePanel />
        <ComponentPanel />
        <PropertyPanel />
      </div>
      <StatusBar />
      <TaskBar />
      <ParamDialog />
      <ImeBar />
      <ScoreBadge />
    </div>
  );
}
